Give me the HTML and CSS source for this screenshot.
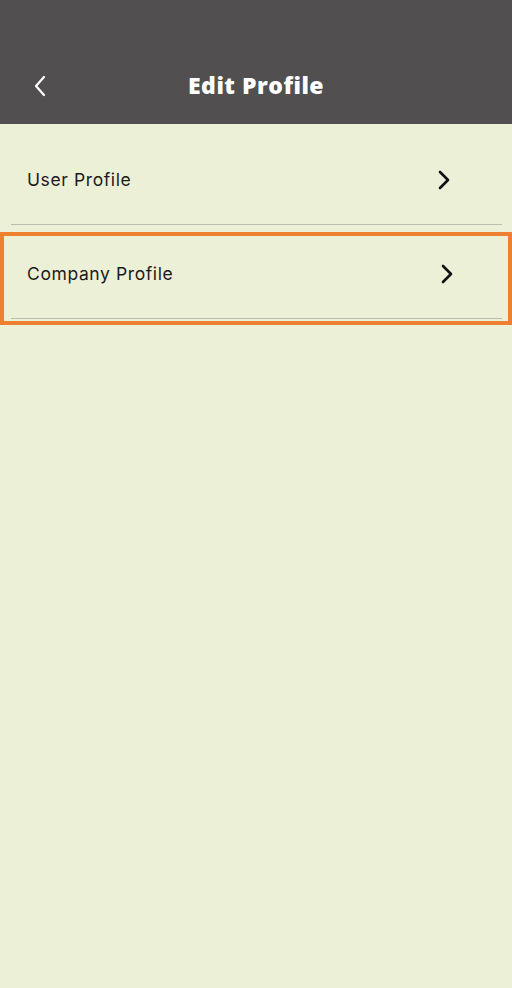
FILE: index.html
```html
<!DOCTYPE html>
<html>
<head>
<meta charset="utf-8">
<link rel="stylesheet" href="styles.css">
</head>
<body>
<header class="topbar">
  <button class="back" aria-label="Back">
    <svg width="14" height="22" viewBox="0 0 14 22"><path d="M11 2 L3 11 L11 20" fill="none" stroke="#fff" stroke-width="2.2" stroke-linecap="round" stroke-linejoin="round"/></svg>
  </button>
  <h1 class="title">Edit Profile</h1>
</header>
<main class="list">
  <div class="row first">
    <span class="label">User Profile</span>
    <svg class="chev" width="14" height="20" viewBox="0 0 14 20"><path d="M3 2 L11 10 L3 18" fill="none" stroke="#111" stroke-width="2.6" stroke-linecap="round" stroke-linejoin="round"/></svg>
  </div>
  <div class="highlight">
    <div class="row second">
      <span class="label">Company Profile</span>
      <svg class="chev" width="14" height="20" viewBox="0 0 14 20"><path d="M3 2 L11 10 L3 18" fill="none" stroke="#111" stroke-width="2.6" stroke-linecap="round" stroke-linejoin="round"/></svg>
    </div>
  </div>
</main>
</body>
</html>
```
FILE: styles.css
```css
* { box-sizing: border-box; }
html, body { margin: 0; padding: 0; }
body {
  width: 512px;
  height: 988px;
  background: #ecf0d6;
  font-family: "Inter", "Liberation Sans", sans-serif;
  overflow: hidden;
}
.topbar {
  height: 124px;
  background: #514f50;
  display: flex;
  align-items: center;
  justify-content: center;
  padding-top: 46px;
  position: relative;
}
.back {
  position: absolute;
  left: 33px;
  top: 75px;
  background: none;
  border: 0;
  padding: 0;
  width: 14px;
  height: 22px;
  display: flex;
}
.title {
  margin: 0;
  color: #fff;
  font-family: "Open Sans", "Liberation Sans", sans-serif;
  font-weight: 800;
  font-size: 23px;
  letter-spacing: 0.5px;
}
.list {
  padding-top: 12px;
}
.row {
  display: flex;
  align-items: center;
  justify-content: space-between;
  border-bottom: 1px solid #b9bcae;
  padding-left: 16px;
  padding-right: 51px;
}
.row.first {
  margin: 0 10px 0 11px;
  height: 89px;
  padding-bottom: 1px;
}
.highlight {
  margin-top: 7px;
  border: 4px solid #ef7f31;
  padding: 0 6px 2px 7px;
}
.row.second {
  height: 83px;
  padding-bottom: 7px;
  padding-right: 48px;
}
.label {
  font-size: 17.5px;
  color: #1b1b1b;
  letter-spacing: 0.6px;
}
.chev { display: block; }
```
